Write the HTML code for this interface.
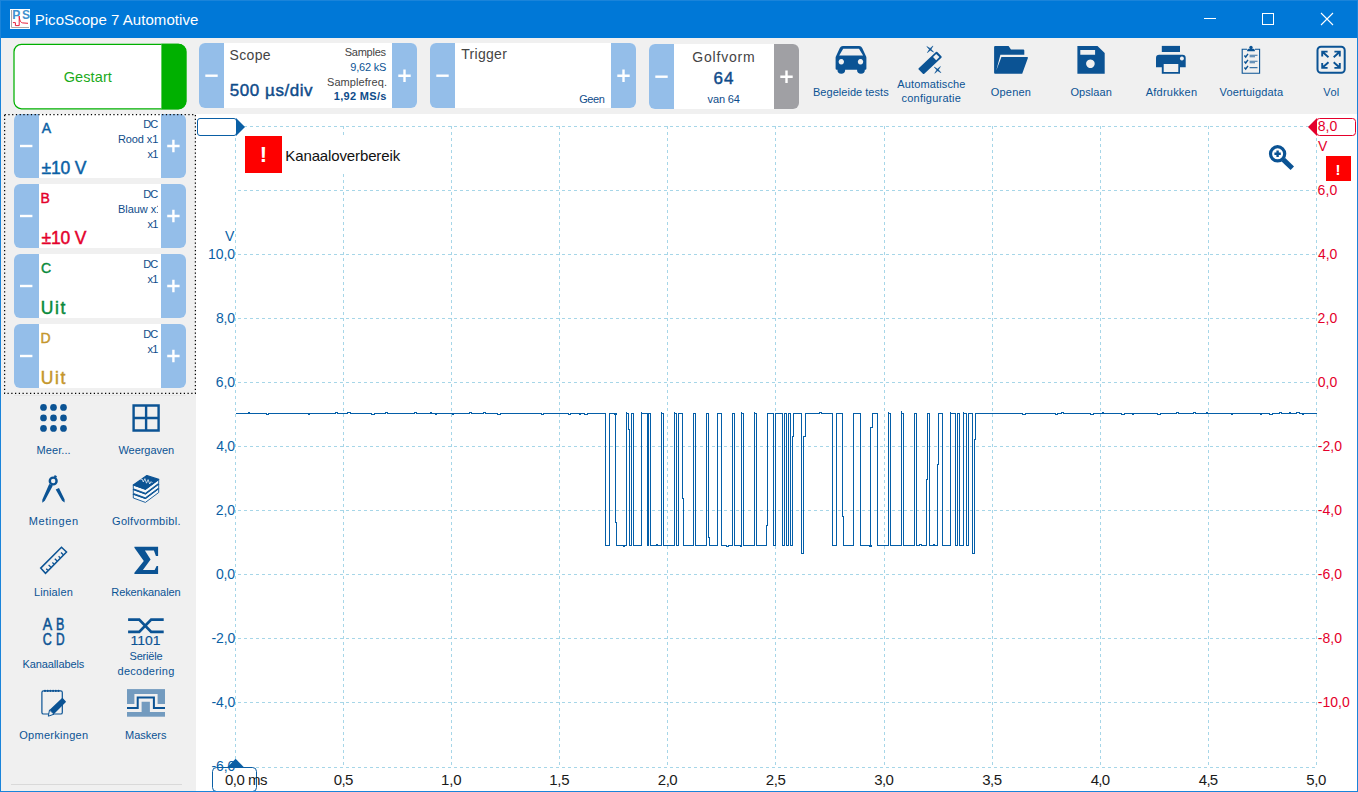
<!DOCTYPE html>
<html lang="nl">
<head>
<meta charset="utf-8">
<title>PicoScope 7 Automotive</title>
<style>
html,body{margin:0;padding:0}
body{width:1358px;height:792px;overflow:hidden;position:relative;background:#f0f0f0;font-family:"Liberation Sans",sans-serif}
.a{position:absolute}
.t{position:absolute;white-space:pre;line-height:normal}
#title{left:0;top:0;width:1358px;height:38px;background:#0078d7}
#bl{left:0;top:0;width:1px;height:792px;background:#1a84da}
#br{left:1357px;top:0;width:1px;height:792px;background:#1a84da}
#bb{left:0;top:791px;width:1358px;height:1px;background:#1a84da}
#bt{left:0;top:0;width:1358px;height:1px;background:#1a84da}
#graph{left:196px;top:114px;width:1161px;height:677px;background:#fff}
.box{position:absolute;background:#fff;border-radius:6px;overflow:hidden}
.box i{position:absolute;top:0;bottom:0;width:25px;background:#94bee9}
.box i.l{left:0}.box i.r{right:0}.box i.g{background:#a0a0a4}
svg{position:absolute;left:0;top:0}
</style>
</head>
<body>
<div class="a" id="title"></div>
<div class="a" id="graph"></div>
<div class="box" style="left:199px;top:43px;width:218px;height:65px"><i class="l"></i><i class="r"></i></div>
<div class="box" style="left:430px;top:43px;width:206px;height:65px"><i class="l"></i><i class="r"></i></div>
<div class="box" style="left:649px;top:44px;width:150px;height:65px"><i class="l"></i><i class="r g"></i></div>
<div class="box" style="left:14px;top:114px;width:172px;height:64px"><i class="l"></i><i class="r"></i></div>
<div class="box" style="left:14px;top:184px;width:172px;height:64px"><i class="l"></i><i class="r"></i></div>
<div class="box" style="left:14px;top:254px;width:172px;height:64px"><i class="l"></i><i class="r"></i></div>
<div class="box" style="left:14px;top:324px;width:172px;height:64px"><i class="l"></i><i class="r"></i></div>
<div class="a" style="left:14px;top:395px;width:172px;height:1px;background:#e7e7e7"></div>
<div class="a" style="left:11px;top:784px;width:171px;height:1px;background:#d9d9d9"></div>
<svg width="1358" height="792" viewBox="0 0 1358 792">
<rect x="4.6" y="114.6" width="190.8" height="278.8" fill="none" stroke="#000" stroke-width="1.25" stroke-dasharray="1.25 2.5"/>
<rect x="14" y="44.250" width="172" height="64.500" rx="7.500" fill="#fff" stroke="#00b000" stroke-width="1.250"/>
<path d="M161.300,43.800H178.200a8,8 0 0 1 8,8V101.200a8,8 0 0 1 -8,8H161.300Z" fill="#00b000"/>
<path d="M161.500,44.500V108.500" stroke="#5fd05f" stroke-width="1" fill="none"/>
<g stroke="#a6d6e8" stroke-width="1" stroke-dasharray="3 3" shape-rendering="crispEdges" fill="none">
<path d="M235.5,126V768"/>
<path d="M343.5,126V768"/>
<path d="M451.5,126V768"/>
<path d="M559.5,126V768"/>
<path d="M667.5,126V768"/>
<path d="M775.5,126V768"/>
<path d="M884.5,126V768"/>
<path d="M992.5,126V768"/>
<path d="M1100.5,126V768"/>
<path d="M1208.5,126V768"/>
<path d="M1316.5,126V768"/>
<path d="M235,126.5H1317" stroke-dashoffset="3"/>
<path d="M235,190.5H1317" stroke-dashoffset="3"/>
<path d="M235,254.5H1317" stroke-dashoffset="3"/>
<path d="M235,318.5H1317" stroke-dashoffset="3"/>
<path d="M235,382.5H1317" stroke-dashoffset="3"/>
<path d="M235,446.5H1317" stroke-dashoffset="3"/>
<path d="M235,510.5H1317" stroke-dashoffset="3"/>
<path d="M235,574.5H1317" stroke-dashoffset="3"/>
<path d="M235,638.5H1317" stroke-dashoffset="3"/>
<path d="M235,702.5H1317" stroke-dashoffset="3"/>
<path d="M235,767.5H1317" stroke-dashoffset="3"/>
</g>
<path d="M235.5,413.5 L248.5,413.5 L248.5,412.5 L249.5,412.5 L249.5,413.5 L266.5,413.5 L266.5,414.5 L268.5,414.5 L268.5,413.5 L308.5,413.5 L308.5,414.5 L309.5,414.5 L309.5,413.5 L335.5,413.5 L335.5,412.5 L337.5,412.5 L337.5,413.5 L347.5,413.5 L347.5,412.5 L350.5,412.5 L350.5,413.5 L371.5,413.5 L371.5,414.5 L374.5,414.5 L374.5,413.5 L385.5,413.5 L385.5,412.5 L387.5,412.5 L387.5,413.5 L414.5,413.5 L414.5,412.5 L416.5,412.5 L416.5,413.5 L430.5,413.5 L430.5,412.5 L431.5,412.5 L431.5,413.5 L435.5,413.5 L435.5,414.5 L436.5,414.5 L436.5,413.5 L452.5,413.5 L452.5,414.5 L453.5,414.5 L453.5,413.5 L469.5,413.5 L469.5,412.5 L471.5,412.5 L471.5,413.5 L483.5,413.5 L483.5,412.5 L485.5,412.5 L485.5,413.5 L497.5,413.5 L497.5,414.5 L500.5,414.5 L500.5,413.5 L541.5,413.5 L541.5,414.5 L543.5,414.5 L543.5,413.5 L568.5,413.5 L568.5,414.5 L570.5,414.5 L570.5,413.5 L579.5,413.5 L579.5,414.5 L580.5,414.5 L580.5,413.5 L584.5,413.5 L584.5,414.5 L587.5,414.5 L587.5,413.5 L605.5,413.5 L605.5,545.5 L609.5,545.5 L609.5,413.5 L609.5,413.5 L614.5,413.5 L614.5,414.5 L616.5,414.5 L616.5,413.5 L615.5,413.5 L615.5,522 L616.5,522 L616.5,545.5 L623.5,545.5 L623.5,546.5 L624.5,546.5 L624.5,545.5 L626.5,545.5 L626.5,411.5 L626.5,413.5 L628.5,413.5 L628.5,429 L629.5,429 L629.5,545.5 L631.5,545.5 L631.5,412.5 L631.5,413.5 L633.5,413.5 L633.5,545.5 L641.5,545.5 L641.5,411.5 L641.5,413.5 L647.5,413.5 L647.5,545.5 L648.5,545.5 L648.5,412.5 L648.5,413.5 L650.5,413.5 L650.5,545.5 L656.5,545.5 L656.5,544.5 L657.5,544.5 L657.5,545.5 L661.5,545.5 L661.5,411.5 L661.5,413.5 L663.5,413.5 L663.5,545.5 L674.5,545.5 L674.5,411.5 L674.5,413.5 L676.5,413.5 L676.5,545.5 L678.5,545.5 L678.5,413.5 L678.5,413.5 L682.5,413.5 L682.5,498 L683.5,498 L683.5,545.5 L693.5,545.5 L693.5,413.5 L693.5,413.5 L695.5,413.5 L695.5,545.5 L706.5,545.5 L706.5,412.5 L706.5,413.5 L708.5,413.5 L708.5,537 L709.5,537 L709.5,545.5 L717.5,545.5 L717.5,413.5 L717.5,413.5 L721.5,413.5 L721.5,545.5 L726.5,545.5 L726.5,546.5 L728.5,546.5 L728.5,545.5 L732.5,545.5 L732.5,412.5 L732.5,413.5 L734.5,413.5 L734.5,545.5 L740.5,545.5 L740.5,546.5 L741.5,546.5 L741.5,545.5 L741.5,545.5 L741.5,411.5 L741.5,413.5 L743.5,413.5 L743.5,545.5 L754.5,545.5 L754.5,411.5 L754.5,413.5 L756.5,413.5 L756.5,545.5 L766.5,545.5 L766.5,525 L767.5,525 L767.5,413.5 L773.5,413.5 L773.5,545.5 L775.5,545.5 L775.5,412.5 L775.5,413.5 L782.5,413.5 L782.5,545.5 L784.5,545.5 L784.5,413.5 L784.5,413.5 L786.5,413.5 L786.5,545.5 L788.5,545.5 L788.5,412.5 L788.5,413.5 L790.5,413.5 L790.5,545.5 L792.5,545.5 L792.5,436 L793.5,436 L793.5,413.5 L801.5,413.5 L801.5,553.5 L803.5,553.5 L803.5,436 L805.5,436 L805.5,413.5 L819.5,413.5 L819.5,412.5 L821.5,412.5 L821.5,413.5 L832.5,413.5 L832.5,545.5 L836.5,545.5 L836.5,413.5 L836.5,413.5 L842.5,413.5 L842.5,516 L843.5,516 L843.5,545.5 L853.5,545.5 L853.5,412.5 L853.5,413.5 L860.5,413.5 L860.5,545.5 L869.5,545.5 L869.5,546.5 L871.5,546.5 L871.5,545.5 L870.5,545.5 L870.5,427 L872.5,427 L872.5,413.5 L877.5,413.5 L877.5,545.5 L888.5,545.5 L888.5,411.5 L888.5,413.5 L890.5,413.5 L890.5,545.5 L901.5,545.5 L901.5,411 L901.5,413.5 L903.5,413.5 L903.5,545.5 L914.5,545.5 L914.5,413.5 L914.5,413.5 L916.5,413.5 L916.5,545.5 L919.5,545.5 L919.5,544.5 L921.5,544.5 L921.5,545.5 L926.5,545.5 L926.5,479 L927.5,479 L927.5,413.5 L929.5,413.5 L929.5,545.5 L933.5,545.5 L933.5,544.5 L934.5,544.5 L934.5,545.5 L937.5,545.5 L937.5,464.6 L938.5,464.6 L938.5,413.5 L942.5,413.5 L942.5,545.5 L950.5,545.5 L950.5,411.5 L950.5,413.5 L955.5,413.5 L955.5,545.5 L957.5,545.5 L957.5,412.5 L957.5,413.5 L959.5,413.5 L959.5,545.5 L963.5,545.5 L963.5,411.5 L963.5,413.5 L966.5,413.5 L966.5,545.5 L968.5,545.5 L968.5,413.5 L968.5,413.5 L972.5,413.5 L972.5,553.5 L974.5,553.5 L974.5,439 L975.5,439 L975.5,413.5 L1022.5,413.5 L1022.5,414.5 L1025.5,414.5 L1025.5,413.5 L1055.5,413.5 L1055.5,414.5 L1057.5,414.5 L1057.5,413.5 L1061.5,413.5 L1061.5,412.5 L1063.5,412.5 L1063.5,413.5 L1090.5,413.5 L1090.5,414.5 L1093.5,414.5 L1093.5,413.5 L1102.5,413.5 L1102.5,412.5 L1103.5,412.5 L1103.5,413.5 L1121.5,413.5 L1121.5,414.5 L1124.5,414.5 L1124.5,413.5 L1132.5,413.5 L1132.5,414.5 L1133.5,414.5 L1133.5,413.5 L1157.5,413.5 L1157.5,414.5 L1160.5,414.5 L1160.5,413.5 L1176.5,413.5 L1176.5,412.5 L1178.5,412.5 L1178.5,413.5 L1193.5,413.5 L1193.5,412.5 L1195.5,412.5 L1195.5,413.5 L1206.5,413.5 L1206.5,412.5 L1207.5,412.5 L1207.5,413.5 L1231.5,413.5 L1231.5,414.5 L1232.5,414.5 L1232.5,413.5 L1260.5,413.5 L1260.5,414.5 L1261.5,414.5 L1261.5,413.5 L1269.5,413.5 L1269.5,414.5 L1272.5,414.5 L1272.5,413.5 L1279.5,413.5 L1279.5,412.5 L1281.5,412.5 L1281.5,413.5 L1289.5,413.5 L1289.5,412.5 L1290.5,412.5 L1290.5,413.5 L1296.5,413.5 L1296.5,412.5 L1299.5,412.5 L1299.5,413.5 L1302.5,413.5 L1302.5,414.5 L1303.5,414.5 L1303.5,413.5 L1316.5,413.5" fill="none" stroke="#045ea8" stroke-width="1" stroke-linejoin="miter" shape-rendering="crispEdges"/>
<rect x="245" y="136" width="160" height="37" fill="#fff"/>
<rect x="245" y="136" width="37" height="37" fill="#fe0000"/>
<rect x="197.5" y="118.500" width="39" height="17" rx="2.500" fill="#fff" stroke="#0a5fa5"/>
<path d="M236,118L245,127L236,136Z" fill="#0a5fa5"/>
<rect x="1316.500" y="118.500" width="39" height="17" rx="3" fill="#fff" stroke="#e4002b"/>
<path d="M1317,118L1308,127L1317,136Z" fill="#e4002b"/>
<rect x="1326" y="156" width="25" height="25" fill="#fe0000"/>
<path d="M227,767.500L235.600,758.800L244.200,767.500Z" fill="#0a5fa5"/>
<rect x="212.500" y="767.500" width="44" height="24" rx="4" fill="none" stroke="#0a5fa5"/>
<g stroke="#0b5394" fill="none">
<circle cx="1277.600" cy="153.800" r="7.100" stroke-width="3.200"/>
<path d="M1283.300,159.600L1292.300,168.200" stroke-width="5"/>
<path d="M1274.400,153.800h6.400M1277.600,150.600v6.400" stroke-width="2.400"/>
</g>

<rect x="10" y="9" width="20" height="20" fill="#fff"/>
<path d="M11.5,10V27.5H29" fill="none" stroke="#a8a8a8" stroke-width="1"/>
<path d="M12.9,22.6H15.4V25.6H19.2V16.1C19.6,20.5 20.6,22.6 22.6,22.9L28,23.3" fill="none" stroke="#e8203c" stroke-width="1"/>
<g stroke="#fff" stroke-width="1" fill="none" shape-rendering="crispEdges"><path d="M1204,18.5H1216"/><rect x="1262.5" y="13.5" width="11" height="11"/></g>
<path d="M1321,13L1333,25M1333,13L1321,25" stroke="#fff" stroke-width="1.1" fill="none"/>
<g stroke="#fff" stroke-width="2.4" fill="none">
<path d="M205.3,75.7H217.7"/>
<path d="M398.3,75.7H410.7M404.5,69.5V81.9"/>
<path d="M436.3,75.7H448.7"/>
<path d="M617.3,75.7H629.7M623.5,69.5V81.9"/>
<path d="M655.3,76.7H667.7"/>
<path d="M780.3,76.7H792.7M786.5,70.5V82.9"/>
<path d="M20.0,146H32.4"/>
<path d="M167.20000000000002,146H179.6M173.4,139.8V152.2"/>
<path d="M20.0,216H32.4"/>
<path d="M167.20000000000002,216H179.6M173.4,209.8V222.2"/>
<path d="M20.0,286H32.4"/>
<path d="M167.20000000000002,286H179.6M173.4,279.8V292.2"/>
<path d="M20.0,356H32.4"/>
<path d="M167.20000000000002,356H179.6M173.4,349.8V362.2"/>
</g>
<g fill="#0b5394">
<path fill-rule="evenodd" d="M842.9,45.9H859.1Q861.3,45.9 862.2,48L866,56.3Q866.4,57 866.4,58V68.5Q866.4,69.7 865.2,69.7H864.8V70.6Q864.8,73.7 861,73.7Q857.1,73.7 857.1,70.6V69.7H845.1V70.6Q845.1,73.7 841.3,73.7Q837.5,73.7 837.5,70.6V69.7H836.8Q835.6,69.7 835.6,68.5V58Q835.6,57 836,56.3L839.8,48Q840.7,45.9 842.9,45.9ZM843.2,48.8H859L863.1,55.5H839.2ZM841.3,59.1a2.7,2.7 0 1 0 0.01,0ZM860.5,59.1a2.7,2.7 0 1 0 0.01,0Z"/>
<path d="M918.7,68.2L935.9,52a1,1 0 0 1 1.4,0L941.4,56.3a1,1 0 0 1 0,1.4L924.3,73.7a1,1 0 0 1 -1.4,0L918.7,69.6a1,1 0 0 1 0,-1.4Z"/>
<path d="M936.2,53.9L939.4,57.1L936.2,60.2L933,57.1Z" fill="#f0f0f0"/>
<g fill="#0b5394" stroke="#0b5394" stroke-width=".5"><path d="M933.57,52.13L930.28,50.18L927.37,52.67L929.32,49.38L926.83,46.47L930.12,48.42L933.03,45.93L931.08,49.22Z"/><path d="M940.97,72.73L937.68,70.78L934.77,73.27L936.72,69.98L934.23,67.07L937.52,69.02L940.43,66.53L938.48,69.82Z"/></g>
<path d="M994.1,46.9a1,1 0 0 1 1,-1H1008.6L1011,49.6H1023.3a1,1 0 0 1 1,1V54.8H1000.4L996.3,70.6L1001.4,57H1027.2a.8,.8 0 0 1 .7,1L1022.2,73.7H995.1a1,1 0 0 1 -1,-1Z"/>
<path fill-rule="evenodd" d="M1077.4,45.9H1097.5L1104.7,52.9V73.7H1077.4ZM1080.3,50H1095.1V54.8H1080.3ZM1090.4,59.4a4.3,4.3 0 1 0 0.01,0Z"/>
<rect x="1161.8" y="45.9" width="18.2" height="6.1"/>
<path fill-rule="evenodd" d="M1156,58a3.2,3.2 0 0 1 3.2,-3.2H1182.5a3.2,3.2 0 0 1 3.2,3.200V67.300H1180V73.700H1161.800V67.300H1156ZM1163.700,63.900H1178.300V72.100H1163.700ZM1181.900,56.500a2,2 0 1 0 0.010,0Z"/>
</g>
<g fill="none" stroke="#0b5394">
<path d="M1247,49.3H1242.200V73.200H1259.600V49.300H1255" stroke-width="1.1"/>
<path d="M1247.200,51.300V50.200a1.500,1.500 0 0 1 1.500,-1.500H1253.300a1.500,1.500 0 0 1 1.500,1.500V51.300Z" fill="#0b5394" stroke="none"/><circle cx="1251" cy="47.500" r="1.700" fill="#0b5394" stroke="none"/>
<path d="M1244.400,55.500l1.300,1.500l2.300,-3.200M1244.400,61.500l1.300,1.500l2.300,-3.200M1244.400,67.500l1.300,1.500l2.300,-3.200" stroke-width="1.400"/>
<path d="M1249.600,55.200H1257.500M1249.600,56.800H1255M1249.600,61.200H1257.500M1249.600,62.800H1255M1249.600,67.600H1257.500" stroke-width="1.1" opacity=".8"/>
</g>
<g fill="none" stroke="#0b5394">
<rect x="1317.500" y="46.800" width="27.200" height="26" rx="3.5" stroke-width="2"/>
<path stroke-width="1.9" d="M1328.500,57.200L1322.600,52M1322.200,56.500V51.600H1327.600 M1333.700,57.200L1339.500,52M1339.800,56.500V51.600H1334.400 M1328.500,62.200L1322.600,67.500M1322.200,63V67.900H1327.600 M1333.700,62.200L1339.500,67.500M1339.800,63V67.900H1334.400"/>
</g>
<g fill="#0b5394">
<circle cx="43.5" cy="407.4" r="3.35"/>
<circle cx="43.5" cy="417.9" r="3.35"/>
<circle cx="43.5" cy="428.4" r="3.35"/>
<circle cx="53.5" cy="407.4" r="3.35"/>
<circle cx="53.5" cy="417.9" r="3.35"/>
<circle cx="53.5" cy="428.4" r="3.35"/>
<circle cx="63.5" cy="407.4" r="3.35"/>
<circle cx="63.5" cy="417.9" r="3.35"/>
<circle cx="63.5" cy="428.4" r="3.35"/>
</g>
<path d="M133.600,405.500H158.600V430.500H133.600ZM146.100,405.500V430.500M133.600,418H158.600" fill="none" stroke="#0b5394" stroke-width="2.4"/>
<circle cx="53.200" cy="481" r="3.400" fill="none" stroke="#0b5394" stroke-width="2.400"/>
<path d="M55,477.400L55.900,475.600" stroke="#0b5394" stroke-width="2.400" fill="none"/>
<path d="M49.200,484L52.900,485.600L44.800,500.800L42.300,502.700L42.300,499.800Z M55.700,489.400L59,487.900L64.600,499.600L64.600,502.600L62.100,500.800Z" fill="#0b5394"/>
<path d="M133.3,494.1L145.4,498.5L158.7,488.6L158.7,492.5L145.4,502.4L133.3,498.0Z" fill="#f6f8fa" stroke="#0b5394" stroke-width=".9" stroke-linejoin="round"/>
<path d="M133.3,494.1L146.9,484.7L158.7,488.6L145.4,498.5Z" fill="#0b5394" stroke="#0b5394" stroke-width="1.2" stroke-linejoin="round"/>
<path d="M133.3,489.5L145.4,493.9L158.7,484.0L158.7,487.9L145.4,497.8L133.3,493.4Z" fill="#f6f8fa" stroke="#0b5394" stroke-width=".9" stroke-linejoin="round"/>
<path d="M133.3,489.5L146.9,480.1L158.7,484.0L145.4,493.9Z" fill="#0b5394" stroke="#0b5394" stroke-width="1.2" stroke-linejoin="round"/>
<path d="M133.3,484.9L145.4,489.3L158.7,479.4L158.7,483.3L145.4,493.2L133.3,488.8Z" fill="#f6f8fa" stroke="#0b5394" stroke-width=".9" stroke-linejoin="round"/>
<path d="M133.3,484.9L146.9,475.5L158.7,479.4L145.4,489.3Z" fill="#0b5394" stroke="#0b5394" stroke-width="1.2" stroke-linejoin="round"/>
<path d="M140.500,479.600l1.600,-.6l1.200,3l1.600,-3.400l1.600,4.600l1.600,-3.600l1.600,4.400l1.400,-2.400l1.400,1.400" fill="none" stroke="#e6eef6" stroke-width=".8"/>
<path d="M40.700,568.100L61.500,547.200L66.500,552L45.500,573.300Z" fill="none" stroke="#0b5394" stroke-width="1.500" stroke-linejoin="miter"/>
<path d="M47.800,570.300l-1.600,-1.600M50.900,567.200l-2.300,-2.300M54,564.100l-1.600,-1.600M57.100,561l-2.300,-2.300M60.200,557.900l-1.600,-1.600M63.300,554.800l-2.300,-2.300" fill="none" stroke="#0b5394" stroke-width="1.300"/>
<path d="M134.4,546.7L158.1,546.7L158.1,555.9L155.9,555.9L153.9,550.5L144.9,550.5L150.6,559.6L142.9,569.9L154.6,569.9L156.6,565.9L158.1,565.9L158.1,573.9L134.4,573.9L134.4,572.8L143.8,560.9L134.4,547.8Z" fill="#0b5394"/>
<path d="M128.100,619.600H139.200L151.200,631.900H163.700 M128.100,631.900H139.200L151.200,619.600H163.700" fill="none" stroke="#0b5394" stroke-width="2.800"/>
<g fill="#0b5394" stroke="#0b5394" stroke-width=".55" font-family="Liberation Sans, sans-serif" font-size="16">
<text x="42.700" y="629.900" textLength="9.400" lengthAdjust="spacingAndGlyphs">A</text><text x="56" y="629.900" textLength="8.300" lengthAdjust="spacingAndGlyphs">B</text>
<text x="42.700" y="645.100" textLength="9" lengthAdjust="spacingAndGlyphs">C</text><text x="56" y="645.100" textLength="8.600" lengthAdjust="spacingAndGlyphs">D</text>
<text x="130.500" y="645.100" font-size="13" stroke-width=".15" textLength="30" lengthAdjust="spacingAndGlyphs">1101</text>
</g>
<rect x="41.900" y="690.800" width="20.400" height="23.200" rx="1.600" fill="none" stroke="#0b5394" stroke-width="1.200"/>
<g fill="#0b5394"><circle cx="45.0" cy="690.900" r="1.050"/><circle cx="47.7" cy="690.900" r="1.050"/><circle cx="50.4" cy="690.900" r="1.050"/><circle cx="53.1" cy="690.900" r="1.050"/><circle cx="55.8" cy="690.900" r="1.050"/><circle cx="58.5" cy="690.900" r="1.050"/></g>
<path d="M48.300,716.200L49.500,710L54,714.200Z" fill="#f0f0f0" stroke="#0b5394" stroke-width="1" stroke-linejoin="round"/>
<path d="M49.700,709.700L61.800,698.300a.8,.8 0 0 1 1.100,0L65.700,701.200a.8,.8 0 0 1 0,1.100L54,713.900Z" fill="#0b5394"/>
<rect x="127" y="689.100" width="38" height="27.600" fill="#739bbf"/>
<path d="M127,704H134.400V694H157.600V704H165V711.900H149.900V701.800H141.600V711.900H127Z" fill="#f0f0f0"/>
<path d="M127,707.900H137.700V697.600H153.900V707.900H165" fill="none" stroke="#0b5394" stroke-width="2"/>
</svg>
<span class="t" style="left:34.65px;top:11.4px;font-size:15px;color:#ffffff;letter-spacing:0.05px">PicoScope 7 Automotive</span>
<span class="t" style="left:63.65px;top:69.1px;font-size:14.5px;color:#1aaa1a;letter-spacing:0.11px">Gestart</span>
<span class="t" style="left:229.55px;top:46.5px;font-size:14px;color:#444444;letter-spacing:0.34px">Scope</span>
<span class="t" style="left:229.85px;top:80.9px;font-size:17px;color:#0f4c8a;letter-spacing:0.54px;-webkit-text-stroke:0.45px #0f4c8a">500 µs/div</span>
<span class="t" style="left:344.70px;top:46.0px;font-size:11px;color:#444444;letter-spacing:-0.23px">Samples</span>
<span class="t" style="left:350.30px;top:61.0px;font-size:11px;color:#0b5394;letter-spacing:-0.21px">9,62 kS</span>
<span class="t" style="left:327.00px;top:75.7px;font-size:11px;color:#444444;letter-spacing:0.07px">Samplefreq.</span>
<span class="t" style="left:333.85px;top:90.3px;font-size:11px;color:#0f4c8a;letter-spacing:0.30px;font-weight:700">1,92 MS/s</span>
<span class="t" style="left:461.15px;top:46.3px;font-size:14px;color:#444444;letter-spacing:0.32px">Trigger</span>
<span class="t" style="left:579.20px;top:93.4px;font-size:11px;color:#0f4c8a;letter-spacing:-0.42px">Geen</span>
<span class="t" style="left:692.25px;top:48.6px;font-size:14px;color:#444444;letter-spacing:0.81px">Golfvorm</span>
<span class="t" style="left:713.45px;top:69.1px;font-size:17px;color:#0f4c8a;letter-spacing:1.15px;-webkit-text-stroke:0.45px #0f4c8a">64</span>
<span class="t" style="left:707.60px;top:92.7px;font-size:11px;color:#0f4c8a;letter-spacing:-0.13px">van 64</span>
<span class="t" style="left:813.00px;top:85.5px;font-size:11px;color:#0b5394;letter-spacing:0.03px">Begeleide tests</span>
<span class="t" style="left:897.30px;top:77.9px;font-size:11px;color:#0b5394;letter-spacing:0.13px">Automatische</span>
<span class="t" style="left:901.50px;top:92.3px;font-size:11px;color:#0b5394;letter-spacing:0.22px">configuratie</span>
<span class="t" style="left:990.80px;top:85.5px;font-size:11px;color:#0b5394;letter-spacing:0.20px">Openen</span>
<span class="t" style="left:1070.40px;top:85.5px;font-size:11px;color:#0b5394;letter-spacing:0.09px">Opslaan</span>
<span class="t" style="left:1145.70px;top:85.5px;font-size:11px;color:#0b5394;letter-spacing:0.23px">Afdrukken</span>
<span class="t" style="left:1219.60px;top:85.5px;font-size:11px;color:#0b5394;letter-spacing:0.15px">Voertuigdata</span>
<span class="t" style="left:1323.30px;top:85.5px;font-size:11px;color:#0b5394;letter-spacing:0.35px">Vol</span>
<span class="t" style="left:41.70px;top:119.9px;font-size:14px;color:#0a5fa5;-webkit-text-stroke:0.45px #0a5fa5">A</span>
<span class="t" style="left:41.50px;top:158.2px;font-size:17.5px;color:#0a5fa5;letter-spacing:-0.20px;-webkit-text-stroke:0.45px #0a5fa5">±10 V</span>
<span class="t" style="left:143.30px;top:117.5px;font-size:11px;color:#0f4c8a;letter-spacing:-1.00px">DC</span>
<span class="t" style="left:118.00px;top:133.0px;font-size:11px;color:#0f4c8a;letter-spacing:-0.12px">Rood x1</span>
<span class="t" style="left:147.45px;top:147.6px;font-size:11px;color:#0f4c8a;letter-spacing:-0.65px">x1</span>
<span class="t" style="left:40.45px;top:189.9px;font-size:14px;color:#e4002b;-webkit-text-stroke:0.45px #e4002b">B</span>
<span class="t" style="left:41.50px;top:228.2px;font-size:17.5px;color:#e4002b;letter-spacing:-0.20px;-webkit-text-stroke:0.45px #e4002b">±10 V</span>
<span class="t" style="left:143.30px;top:187.5px;font-size:11px;color:#0f4c8a;letter-spacing:-1.00px">DC</span>
<span class="t" style="left:118.00px;top:203.0px;font-size:11px;color:#0f4c8a;letter-spacing:-0.06px;width:39.6px;overflow:hidden">Blauw x1</span>
<span class="t" style="left:147.45px;top:217.6px;font-size:11px;color:#0f4c8a;letter-spacing:-0.65px">x1</span>
<span class="t" style="left:40.95px;top:259.9px;font-size:14px;color:#0a8a3c;-webkit-text-stroke:0.45px #0a8a3c">C</span>
<span class="t" style="left:40.75px;top:298.2px;font-size:17.5px;color:#0a8a3c;letter-spacing:1.60px;-webkit-text-stroke:0.45px #0a8a3c">Uit</span>
<span class="t" style="left:143.30px;top:257.5px;font-size:11px;color:#0f4c8a;letter-spacing:-1.00px">DC</span>
<span class="t" style="left:147.45px;top:272.6px;font-size:11px;color:#0f4c8a;letter-spacing:-0.65px">x1</span>
<span class="t" style="left:40.45px;top:329.9px;font-size:14px;color:#c4962c;-webkit-text-stroke:0.45px #c4962c">D</span>
<span class="t" style="left:40.75px;top:368.2px;font-size:17.5px;color:#c4962c;letter-spacing:1.60px;-webkit-text-stroke:0.45px #c4962c">Uit</span>
<span class="t" style="left:143.30px;top:327.5px;font-size:11px;color:#0f4c8a;letter-spacing:-1.00px">DC</span>
<span class="t" style="left:147.45px;top:342.6px;font-size:11px;color:#0f4c8a;letter-spacing:-0.65px">x1</span>
<span class="t" style="left:36.50px;top:443.7px;font-size:11px;color:#0b5394;letter-spacing:0.09px">Meer...</span>
<span class="t" style="left:118.50px;top:443.7px;font-size:11px;color:#0b5394;letter-spacing:-0.06px">Weergaven</span>
<span class="t" style="left:28.70px;top:514.6px;font-size:11px;color:#0b5394;letter-spacing:0.59px">Metingen</span>
<span class="t" style="left:112.10px;top:514.6px;font-size:11px;color:#0b5394;letter-spacing:0.30px">Golfvormbibl.</span>
<span class="t" style="left:34.00px;top:586.0px;font-size:11px;color:#0b5394;letter-spacing:0.12px">Linialen</span>
<span class="t" style="left:111.30px;top:586.0px;font-size:11px;color:#0b5394;letter-spacing:-0.09px">Rekenkanalen</span>
<span class="t" style="left:22.50px;top:657.6px;font-size:11px;color:#0b5394;letter-spacing:-0.11px">Kanaallabels</span>
<span class="t" style="left:129.50px;top:650.0px;font-size:11px;color:#0b5394;letter-spacing:-0.18px">Seriële</span>
<span class="t" style="left:117.50px;top:664.6px;font-size:11px;color:#0b5394;letter-spacing:0.26px">decodering</span>
<span class="t" style="left:19.30px;top:728.6px;font-size:11px;color:#0b5394;letter-spacing:0.27px">Opmerkingen</span>
<span class="t" style="left:125.00px;top:728.6px;font-size:11px;color:#0b5394;letter-spacing:-0.01px">Maskers</span>
<span class="t" style="left:285.35px;top:146.9px;font-size:15px;color:#111111;letter-spacing:-0.13px">Kanaaloverbereik</span>
<span class="t" style="left:207.90px;top:246.1px;font-size:14px;color:#0a5fa5;letter-spacing:-0.02px">10,0</span>
<span class="t" style="left:216.00px;top:310.1px;font-size:14px;color:#0a5fa5;letter-spacing:-0.20px">8,0</span>
<span class="t" style="left:215.75px;top:374.1px;font-size:14px;color:#0a5fa5;letter-spacing:-0.08px">6,0</span>
<span class="t" style="left:216.25px;top:438.1px;font-size:14px;color:#0a5fa5;letter-spacing:-0.33px">4,0</span>
<span class="t" style="left:215.75px;top:502.1px;font-size:14px;color:#0a5fa5;letter-spacing:-0.08px">2,0</span>
<span class="t" style="left:216.00px;top:566.1px;font-size:14px;color:#0a5fa5;letter-spacing:-0.20px">0,0</span>
<span class="t" style="left:211.60px;top:630.1px;font-size:14px;color:#0a5fa5;letter-spacing:-0.17px">-2,0</span>
<span class="t" style="left:211.60px;top:694.1px;font-size:14px;color:#0a5fa5;letter-spacing:-0.17px">-4,0</span>
<span class="t" style="left:211.60px;top:758.1px;font-size:14px;color:#0a5fa5;letter-spacing:-0.17px">-6,0</span>
<span class="t" style="left:224.95px;top:227.8px;font-size:14px;color:#0a5fa5">V</span>
<span class="t" style="left:1317.80px;top:118.2px;font-size:14px;color:#e4002b">8,0</span>
<span class="t" style="left:1317.55px;top:182.2px;font-size:14px;color:#e4002b;letter-spacing:0.12px">6,0</span>
<span class="t" style="left:1318.05px;top:246.2px;font-size:14px;color:#e4002b;letter-spacing:-0.12px">4,0</span>
<span class="t" style="left:1317.55px;top:310.2px;font-size:14px;color:#e4002b;letter-spacing:0.12px">2,0</span>
<span class="t" style="left:1317.80px;top:374.2px;font-size:14px;color:#e4002b">0,0</span>
<span class="t" style="left:1317.80px;top:438.2px;font-size:14px;color:#e4002b">-2,0</span>
<span class="t" style="left:1317.80px;top:502.2px;font-size:14px;color:#e4002b">-4,0</span>
<span class="t" style="left:1317.80px;top:566.2px;font-size:14px;color:#e4002b">-6,0</span>
<span class="t" style="left:1317.80px;top:630.2px;font-size:14px;color:#e4002b">-8,0</span>
<span class="t" style="left:1317.80px;top:694.2px;font-size:14px;color:#e4002b;letter-spacing:0.01px">-10,0</span>
<span class="t" style="left:1318.05px;top:137.6px;font-size:14px;color:#e4002b">V</span>
<span class="t" style="left:224.90px;top:771.1px;font-size:15px;color:#1a1a1a;letter-spacing:-0.46px">0,0 ms</span>
<span class="t" style="left:333.70px;top:771.1px;font-size:15px;color:#1a1a1a;letter-spacing:-0.58px">0,5</span>
<span class="t" style="left:441.05px;top:771.1px;font-size:15px;color:#1a1a1a;letter-spacing:-0.20px">1,0</span>
<span class="t" style="left:549.15px;top:771.1px;font-size:15px;color:#1a1a1a;letter-spacing:-0.20px">1,5</span>
<span class="t" style="left:657.75px;top:771.1px;font-size:15px;color:#1a1a1a;letter-spacing:-0.45px">2,0</span>
<span class="t" style="left:765.85px;top:771.1px;font-size:15px;color:#1a1a1a;letter-spacing:-0.45px">2,5</span>
<span class="t" style="left:874.20px;top:771.1px;font-size:15px;color:#1a1a1a;letter-spacing:-0.57px">3,0</span>
<span class="t" style="left:982.30px;top:771.1px;font-size:15px;color:#1a1a1a;letter-spacing:-0.57px">3,5</span>
<span class="t" style="left:1090.65px;top:771.1px;font-size:15px;color:#1a1a1a;letter-spacing:-0.70px">4,0</span>
<span class="t" style="left:1198.75px;top:771.1px;font-size:15px;color:#1a1a1a;letter-spacing:-0.70px">4,5</span>
<span class="t" style="left:1306.35px;top:771.1px;font-size:15px;color:#1a1a1a;letter-spacing:-0.45px">5,0</span>
<span class="t" style="left:12.15px;top:7.8px;font-size:12px;color:#4092cf;letter-spacing:1.85px;font-weight:700">PS</span>
<span class="t" style="left:259.80px;top:142.4px;font-size:22px;color:#ffffff;font-weight:700">!</span>
<span class="t" style="left:1335.50px;top:160.6px;font-size:15px;color:#ffffff;font-weight:700">!</span>
<div class="a" id="bl"></div><div class="a" id="br"></div><div class="a" id="bb"></div><div class="a" id="bt"></div>
</body>
</html>
